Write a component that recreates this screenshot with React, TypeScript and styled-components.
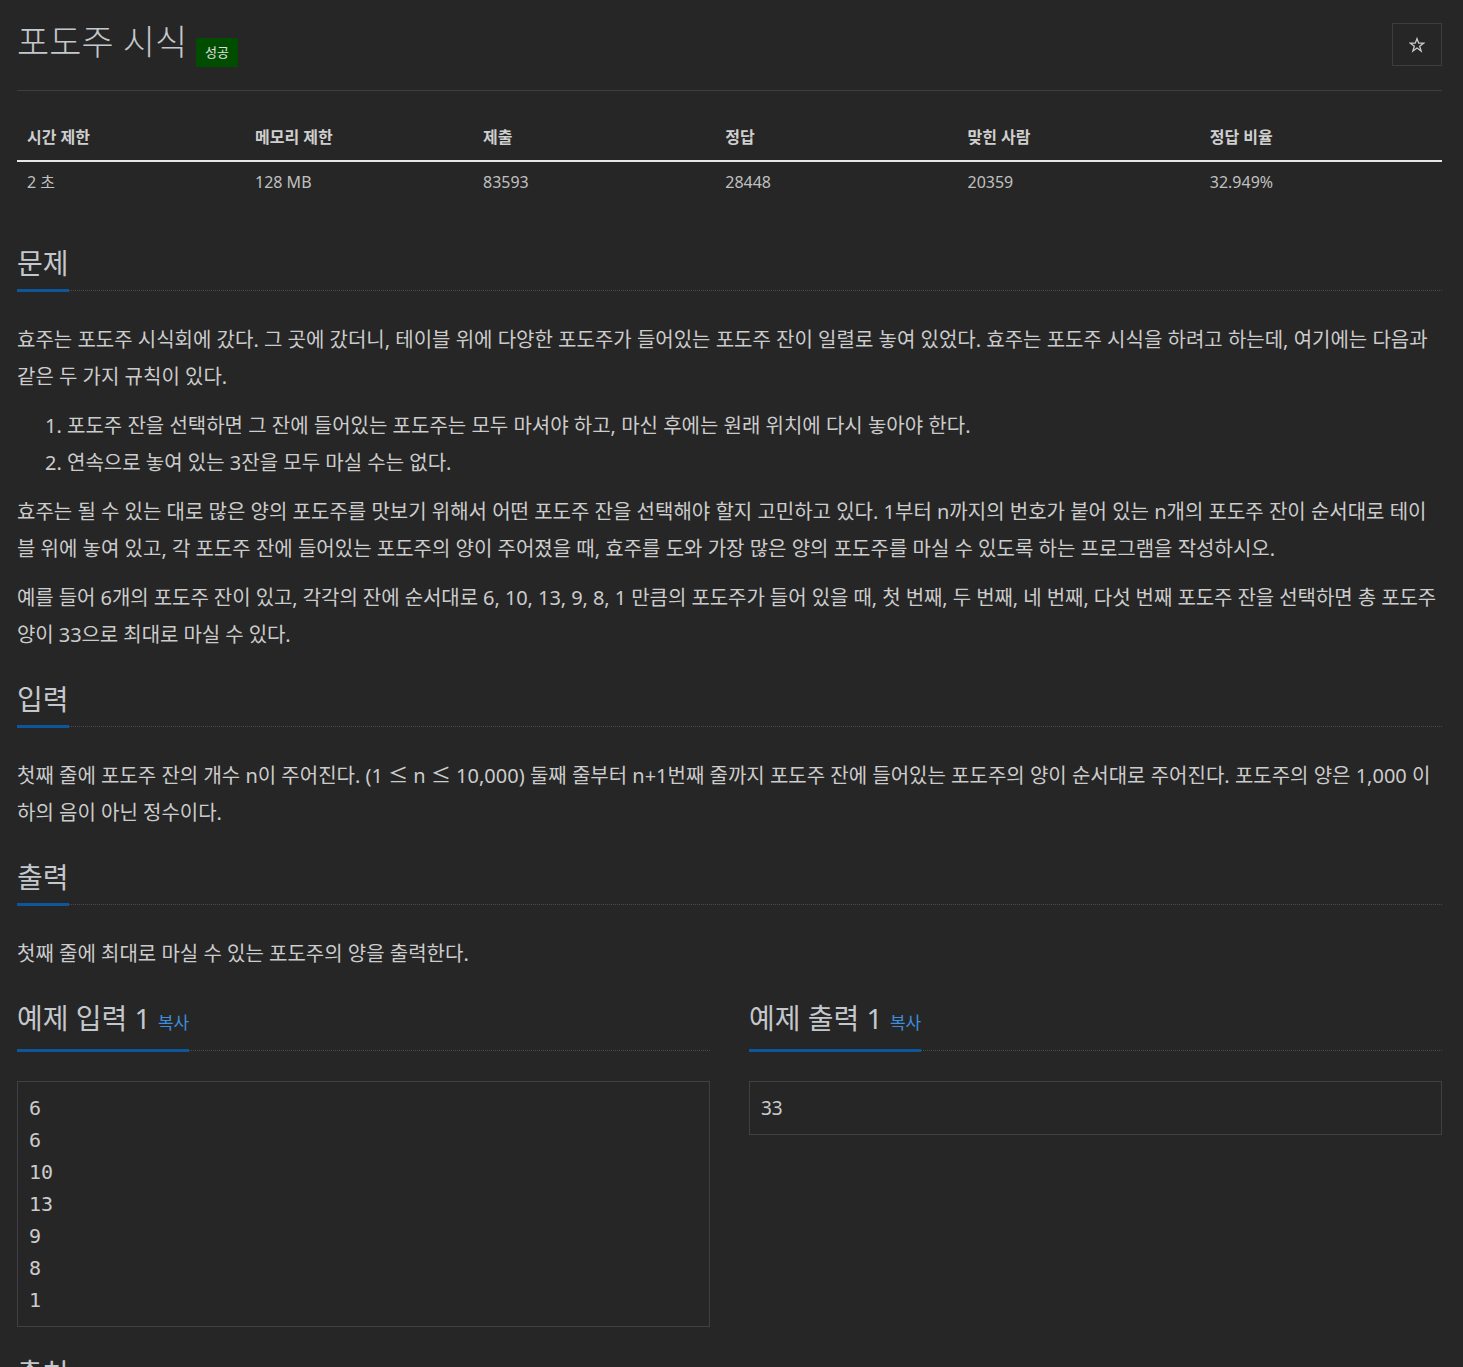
import styled, { createGlobalStyle } from "styled-components";

const GlobalStyle = createGlobalStyle`
  body {
    margin: 0;
    background-color: #262626;
    color: #cccccc;
    font-family: "Noto Sans", "Noto Sans CJK KR", sans-serif;
  }
  * {
    box-sizing: border-box;
  }
`;

const stats = [
  { label: "시간 제한", value: "2 초", width: "16%" },
  { label: "메모리 제한", value: "128 MB", width: "16%" },
  { label: "제출", value: "83593", width: "17%" },
  { label: "정답", value: "28448", width: "17%" },
  { label: "맞힌 사람", value: "20359", width: "17%" },
  { label: "정답 비율", value: "32.949%", width: "17%" },
];

const sampleInput = ["6", "6", "10", "13", "9", "8", "1"];

const StarIcon = () => (
  <svg width="16" height="16" viewBox="0 0 24 24" fill="none" stroke="currentColor" strokeWidth="2" strokeLinejoin="miter">
    <polygon points="12,2.5 14.6,9.3 21.8,9.3 16,13.8 18.2,21 12,16.6 5.8,21 8,13.8 2.2,9.3 9.4,9.3" />
  </svg>
);

const App = () => {
  return (
    <>
      <GlobalStyle />
      <Page>
        <Header>
          <Title>
            포도주 시식
            <Badge>성공</Badge>
          </Title>
          <StarButton type="button">
            <StarIcon />
          </StarButton>
        </Header>

        <StatTable>
          <thead>
            <tr>
              {stats.map((s) => (
                <Th key={s.label} style={{ width: s.width }}>
                  {s.label}
                </Th>
              ))}
            </tr>
          </thead>
          <tbody>
            <tr>
              {stats.map((s) => (
                <Td key={s.label}>{s.value}</Td>
              ))}
            </tr>
          </tbody>
        </StatTable>

        <Section $first>
          <Headline>
            <HeadlineText>문제</HeadlineText>
          </Headline>
          <Paragraph>
            효주는 포도주 시식회에 갔다. 그 곳에 갔더니, 테이블 위에 다양한 포도주가 들어있는 포도주 잔이 일렬로 놓여 있었다. 효주는 포도주 시식을 하려고 하는데, 여기에는 다음과 같은 두 가지 규칙이 있다.
          </Paragraph>
          <List>
            <li>포도주 잔을 선택하면 그 잔에 들어있는 포도주는 모두 마셔야 하고, 마신 후에는 원래 위치에 다시 놓아야 한다.</li>
            <li>연속으로 놓여 있는 3잔을 모두 마실 수는 없다.</li>
          </List>
          <Paragraph>
            효주는 될 수 있는 대로 많은 양의 포도주를 맛보기 위해서 어떤 포도주 잔을 선택해야 할지 고민하고 있다. 1부터 n까지의 번호가 붙어 있는 n개의 포도주 잔이 순서대로 테이블 위에 놓여 있고, 각 포도주 잔에 들어있는 포도주의 양이 주어졌을 때, 효주를 도와 가장 많은 양의 포도주를 마실 수 있도록 하는 프로그램을 작성하시오.
          </Paragraph>
          <Paragraph $tight>
            예를 들어 6개의 포도주 잔이 있고, 각각의 잔에 순서대로 6, 10, 13, 9, 8, 1 만큼의 포도주가 들어 있을 때, 첫 번째, 두 번째, 네 번째, 다섯 번째 포도주 잔을 선택하면 총 포도주 양이 33으로 최대로 마실 수 있다.
          </Paragraph>
        </Section>

        <Section>
          <Headline>
            <HeadlineText>입력</HeadlineText>
          </Headline>
          <Paragraph>
            첫째 줄에 포도주 잔의 개수 n이 주어진다. (1 ≤ n ≤ 10,000) 둘째 줄부터 n+1번째 줄까지 포도주 잔에 들어있는 포도주의 양이 순서대로 주어진다. 포도주의 양은 1,000 이하의 음이 아닌 정수이다.
          </Paragraph>
        </Section>

        <Section>
          <Headline>
            <HeadlineText>출력</HeadlineText>
          </Headline>
          <Paragraph>첫째 줄에 최대로 마실 수 있는 포도주의 양을 출력한다.</Paragraph>
        </Section>

        <SampleGrid>
          <Section>
            <Headline>
              <HeadlineText>
                예제 입력 1 <CopyLink>복사</CopyLink>
              </HeadlineText>
            </Headline>
            <SampleBox>{sampleInput.join("\n")}</SampleBox>
          </Section>
          <Section>
            <Headline>
              <HeadlineText>
                예제 출력 1 <CopyLink>복사</CopyLink>
              </HeadlineText>
            </Headline>
            <SampleBox $narrow>33</SampleBox>
          </Section>
        </SampleGrid>

        <Section>
          <Headline>
            <HeadlineText>출처</HeadlineText>
          </Headline>
        </Section>
      </Page>
    </>
  );
};

const Page = styled.div`
  padding: 0 21px 40px 17px;
`;

const Header = styled.header`
  display: flex;
  justify-content: space-between;
  align-items: flex-start;
  padding: 20px 0 23px;
  border-bottom: 1px solid #3d3d3d;
`;

const Title = styled.h1`
  margin: 0;
  font-size: 35px;
  font-weight: 300;
  line-height: 44px;
  color: #c4c8cc;
  display: flex;
  align-items: flex-start;
`;

const Badge = styled.span`
  display: inline-block;
  margin: 18px 0 0 9px;
  padding: 0 9px;
  height: 29px;
  line-height: 29px;
  font-size: 13px;
  font-weight: 400;
  background-color: #004d00;
  color: #e0e0e0;
`;

const StarButton = styled.button`
  margin-top: 3px;
  width: 50px;
  height: 43px;
  display: flex;
  align-items: center;
  justify-content: center;
  background: transparent;
  border: 1px solid #3d3d3d;
  color: #c8c8c8;
  padding: 0;
`;

const StatTable = styled.table`
  width: 100%;
  margin-top: 28px;
  border-collapse: collapse;
  font-size: 16px;
`;

const Th = styled.th`
  text-align: left;
  font-weight: 700;
  line-height: 20px;
  padding: 8px 10px 13px;
  border-bottom: 2px solid #e6e6e6;
  color: #cfcfcf;
`;

const Td = styled.td`
  line-height: 20px;
  padding: 10px;
  color: #c0c0c0;
`;

const Section = styled.section<{ $first?: boolean }>`
  margin-top: ${({ $first }) => ($first ? "43px" : "28px")};
`;

const Headline = styled.div`
  border-bottom: 1px dotted #4a4a4a;
  margin-bottom: 30px;
`;

const HeadlineText = styled.h2`
  display: inline-block;
  margin: 0 0 -2px;
  padding-bottom: 8px;
  font-size: 28px;
  font-weight: 400;
  line-height: 36px;
  color: #c4c8cc;
  border-bottom: 3px solid #0c5699;
`;

const CopyLink = styled.a`
  font-size: 17px;
  color: #3e8ede;
  cursor: pointer;
`;

const Paragraph = styled.p<{ $tight?: boolean }>`
  margin: 0 0 12px;
  font-size: 20px;
  line-height: 37px;
  letter-spacing: ${({ $tight }) => ($tight ? "-0.07px" : "normal")};
  color: #cccccc;

  &:last-child {
    margin-bottom: 0;
  }
`;

const List = styled.ol`
  margin: 0 0 12px;
  padding-left: 50px;
  font-size: 20px;
  line-height: 37px;
  color: #cccccc;
`;

const SampleGrid = styled.div`
  display: grid;
  grid-template-columns: 1fr 1fr;
  column-gap: 39px;
`;

const SampleBox = styled.pre<{ $narrow?: boolean }>`
  margin: 0;
  padding: 10px 11px;
  border: 1px solid #3f3f44;
  background-color: #262626;
  color: #cccccc;
  font-family: ${({ $narrow }) =>
    $narrow ? '"Noto Sans", sans-serif' : '"DejaVu Sans Mono", monospace'};
  font-size: ${({ $narrow }) => ($narrow ? "19px" : "20px")};
  line-height: 32px;
  white-space: pre;
`;

export default App;
